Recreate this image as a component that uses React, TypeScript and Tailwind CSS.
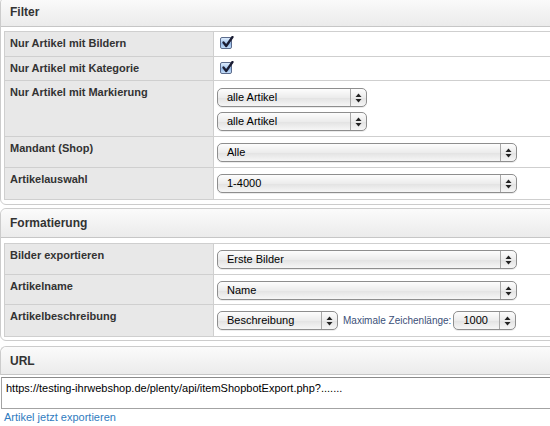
import React from "react";

// kleine Pfeile rechts im Aqua-Select
function Arrows() {
  return (
    <svg width="7" height="10" viewBox="0 0 7 10">
      <path d="M3.5 0.5 L6.5 4 L0.5 4 Z" fill="#222" />
      <path d="M3.5 9.5 L6.5 6 L0.5 6 Z" fill="#222" />
    </svg>
  );
}

function Select({ value, w }: { value: string; w: string }) {
  return (
    <div
      className={`${w} flex h-[19px] items-stretch rounded-[5px] border border-[#8e8e8e] bg-[linear-gradient(#fdfdfd,#ececec_50%,#e2e2e2_51%,#f6f6f6)] shadow-[0_1px_0_rgba(0,0,0,0.08)]`}
    >
      <div className="flex-1 truncate pl-[9px] text-[11px] leading-[17px] text-black">{value}</div>
      <div className="flex w-[16px] items-center justify-center border-l border-[#a8a8a8]">
        <Arrows />
      </div>
    </div>
  );
}

function Check() {
  return (
    <div className="relative mt-[5px] ml-[3px] h-[12px] w-[12px] rounded-[2px] border border-[#5b6b8c] bg-[linear-gradient(#dcebfc,#a9c9f0_50%,#8cb5e8_51%,#c4dcf7)]">
      <svg className="absolute -top-[2px] left-[1px]" width="12" height="12" viewBox="0 0 12 12">
        <path d="M1.5 6.5 L4.2 10 L10.5 1" fill="none" stroke="#1b1d33" strokeWidth="2.3" strokeLinecap="round" strokeLinejoin="round" />
      </svg>
    </div>
  );
}

function Row({ label, h, children, last }: { label: string; h: string; children: React.ReactNode; last?: boolean }) {
  return (
    <div className={`flex ${h} ${last ? "" : "border-b border-[#cfcfcf]"}`}>
      <div className="w-[209px] shrink-0 border-r border-[#cfcfcf] bg-[#e8e8e8] pl-[5px] pt-[4px] text-[11px] font-bold leading-[14px] text-[#333]">
        {label}
      </div>
      <div className="flex-1 pl-[3px]">{children}</div>
    </div>
  );
}

function Box({ title, className, children }: { title: string; className: string; children?: React.ReactNode }) {
  return (
    <div className={`${className} w-[580px] rounded-[6px] border border-[#cccccc] bg-white`}>
      <div className="flex h-[29px] items-center rounded-t-[6px] border-b border-[#c6c6c6] bg-[linear-gradient(#fbfbfb,#ebebeb)] pl-[9px] text-[12px] font-bold text-[#333]">
        {title}
      </div>
      {children}
    </div>
  );
}

export default function App() {
  return (
    <div className="h-[426px] w-[550px] overflow-hidden bg-white font-['Liberation_Sans',Arial,sans-serif]">
      <Box title="Filter" className="-mt-[3px] pb-[4px]">
        <div className="ml-[3px] mt-[4px] border border-[#cfcfcf]">
          <Row label="Nur Artikel mit Bildern" h="h-[25px]">
            <Check />
          </Row>
          <Row label="Nur Artikel mit Kategorie" h="h-[24px]">
            <Check />
          </Row>
          <Row label="Nur Artikel mit Markierung" h="h-[56px]">
            <div className="flex flex-col gap-[5px] pt-[7px]">
              <Select value="alle Artikel" w="w-[150px]" />
              <Select value="alle Artikel" w="w-[150px]" />
            </div>
          </Row>
          <Row label="Mandant (Shop)" h="h-[31px]">
            <div className="pt-[6px]">
              <Select value="Alle" w="w-[300px]" />
            </div>
          </Row>
          <Row label="Artikelauswahl" h="h-[31px]" last>
            <div className="pt-[6px]">
              <Select value="1-4000" w="w-[300px]" />
            </div>
          </Row>
        </div>
      </Box>

      <Box title="Formatierung" className="mt-[3px] pb-[3px]">
        <div className="ml-[3px] mt-[5px] border border-[#cfcfcf]">
          <Row label="Bilder exportieren" h="h-[31px]">
            <div className="pt-[6px]">
              <Select value="Erste Bilder" w="w-[300px]" />
            </div>
          </Row>
          <Row label="Artikelname" h="h-[30px]">
            <div className="pt-[6px]">
              <Select value="Name" w="w-[300px]" />
            </div>
          </Row>
          <Row label="Artikelbeschreibung" h="h-[31px]" last>
            <div className="flex items-center gap-[5px] pt-[6px]">
              <Select value="Beschreibung" w="w-[121px]" />
              <span className="text-[10px] text-[#3b4f78]">Maximale Zeichenlänge:</span>
              <div className="ml-[-3px]">
                <Select value="1000" w="w-[63px]" />
              </div>
            </div>
          </Row>
        </div>
      </Box>

      <div className="mt-[5px] w-[580px] rounded-t-[6px] border-t border-l border-[#cccccc]">
        <div className="flex h-[28px] items-center rounded-t-[6px] border-b border-[#c6c6c6] bg-[linear-gradient(#fbfbfb,#ebebeb)] pl-[9px] text-[12px] font-bold text-[#333]">
          URL
        </div>
      </div>
      <div className="ml-[1px] mt-[2px] h-[32px] w-[560px] border border-[#a3a3a3] border-t-[#8a8a8a] pl-[4px] pt-[3px] text-[11px] leading-[14px] text-black">
        https://testing-ihrwebshop.de/plenty/api/itemShopbotExport.php?.......
      </div>
      <a className="ml-[4px] mt-[1px] block text-[11px] leading-[14px] text-[#2f7cc0]">Artikel jetzt exportieren</a>
    </div>
  );
}
